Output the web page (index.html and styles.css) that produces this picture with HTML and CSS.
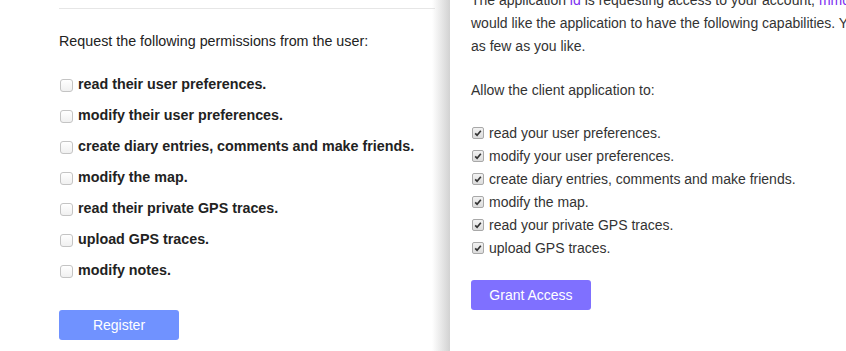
FILE: index.html
```html
<!DOCTYPE html>
<html>
<head>
<meta charset="utf-8">
<link rel="stylesheet" href="styles.css">
</head>
<body>
<div class="page">
  <main class="main">
    <hr class="rule">
    <p class="intro">Request the following permissions from the user:</p>
    <ul class="perms">
      <li><span class="box"></span>read their user preferences.</li>
      <li><span class="box"></span>modify their user preferences.</li>
      <li><span class="box"></span>create diary entries, comments and make friends.</li>
      <li><span class="box"></span>modify the map.</li>
      <li><span class="box"></span>read their private GPS traces.</li>
      <li><span class="box"></span>upload GPS traces.</li>
      <li><span class="box"></span>modify notes.</li>
    </ul>
    <button class="btn btn-register">Register</button>
  </main>
  <div class="shade"></div>
  <aside class="panel">
    <p class="lead">The application <a class="link">id</a> is requesting access to your account, <a class="link">mmd</a>. Please check whether you<br>would like the application to have the following capabilities. You can choose as many or<br>as few as you like.</p>
    <p class="allow">Allow the client application to:</p>
    <ul class="grants">
      <li><span class="cbox"><svg viewBox="0 0 12 12"><path d="M2.6 6.4 L4.9 8.6 L9.4 3.2" fill="none" stroke="#333" stroke-width="2"/></svg></span>read your user preferences.</li>
      <li><span class="cbox"><svg viewBox="0 0 12 12"><path d="M2.6 6.4 L4.9 8.6 L9.4 3.2" fill="none" stroke="#333" stroke-width="2"/></svg></span>modify your user preferences.</li>
      <li><span class="cbox"><svg viewBox="0 0 12 12"><path d="M2.6 6.4 L4.9 8.6 L9.4 3.2" fill="none" stroke="#333" stroke-width="2"/></svg></span>create diary entries, comments and make friends.</li>
      <li><span class="cbox"><svg viewBox="0 0 12 12"><path d="M2.6 6.4 L4.9 8.6 L9.4 3.2" fill="none" stroke="#333" stroke-width="2"/></svg></span>modify the map.</li>
      <li><span class="cbox"><svg viewBox="0 0 12 12"><path d="M2.6 6.4 L4.9 8.6 L9.4 3.2" fill="none" stroke="#333" stroke-width="2"/></svg></span>read your private GPS traces.</li>
      <li><span class="cbox"><svg viewBox="0 0 12 12"><path d="M2.6 6.4 L4.9 8.6 L9.4 3.2" fill="none" stroke="#333" stroke-width="2"/></svg></span>upload GPS traces.</li>
    </ul>
    <button class="btn btn-grant">Grant Access</button>
  </aside>
</div>
</body>
</html>
```

FILE: styles.css
```css
html, body {
  margin: 0;
  padding: 0;
  background: #fff;
  overflow: hidden;
}
body {
  font-family: "Liberation Sans", Arial, sans-serif;
  font-size: 14px;
  color: #333;
  width: 846px;
  height: 351px;
}
.page {
  display: flex;
  height: 351px;
  overflow: hidden;
}
.main {
  flex: 0 0 376px;
  padding-left: 59px;
  margin-right: -3px;
  font-size: 14.3px;
}
.rule {
  border: 0;
  border-top: 1px solid #e6e6e6;
  margin: 8px 0 0 0;
  height: 0;
}
.intro {
  margin: 22px 0 0 0;
  line-height: 20px;
  color: #222;
}
.perms {
  list-style: none;
  margin: 23px 0 0 0;
  padding: 0;
}
.perms li {
  display: flex;
  align-items: center;
  height: 20px;
  margin-bottom: 11px;
  font-weight: bold;
  color: #222;
}
.box {
  width: 11px;
  height: 11px;
  border: 1px solid #c4c4c4;
  border-radius: 3px;
  background: linear-gradient(#fff, #f0f0f0);
  margin: 2px 5px 0 1px;
  flex: 0 0 auto;
}
.btn {
  display: block;
  width: 120px;
  height: 30px;
  border: 0;
  border-radius: 3px;
  color: #fff;
  font-family: "Liberation Sans", Arial, sans-serif;
  font-size: 14px;
  padding: 0;
}
.btn-register {
  margin-top: 30px;
  background: #7092ff;
}
.shade {
  flex: 0 0 18px;
  background: linear-gradient(to right, rgba(255,255,255,0), #d2d2d2);
  position: relative;
  z-index: 1;
}
.panel {
  flex: 0 0 620px;
  padding-left: 21px;
  background: #fff;
}
.lead {
  margin: -11px 0 0 0;
  line-height: 23px;
  white-space: nowrap;
}
.link {
  color: #7b2ff0;
}
.allow {
  margin: 21px 0 0 0;
  line-height: 23px;
}
.grants {
  list-style: none;
  margin: 19px 0 0 0;
  padding: 0;
}
.grants li {
  display: flex;
  align-items: center;
  height: 23px;
}
.cbox {
  width: 10px;
  height: 10px;
  border: 1px solid #a8a8a8;
  border-radius: 2px;
  background: linear-gradient(#f2f2f2, #dcdcdc);
  margin: 0 5px 0 1px;
  flex: 0 0 auto;
  display: flex;
}
.cbox svg {
  width: 10px;
  height: 10px;
}
.btn-grant {
  margin-top: 21px;
  background: #7f70ff;
}
```
